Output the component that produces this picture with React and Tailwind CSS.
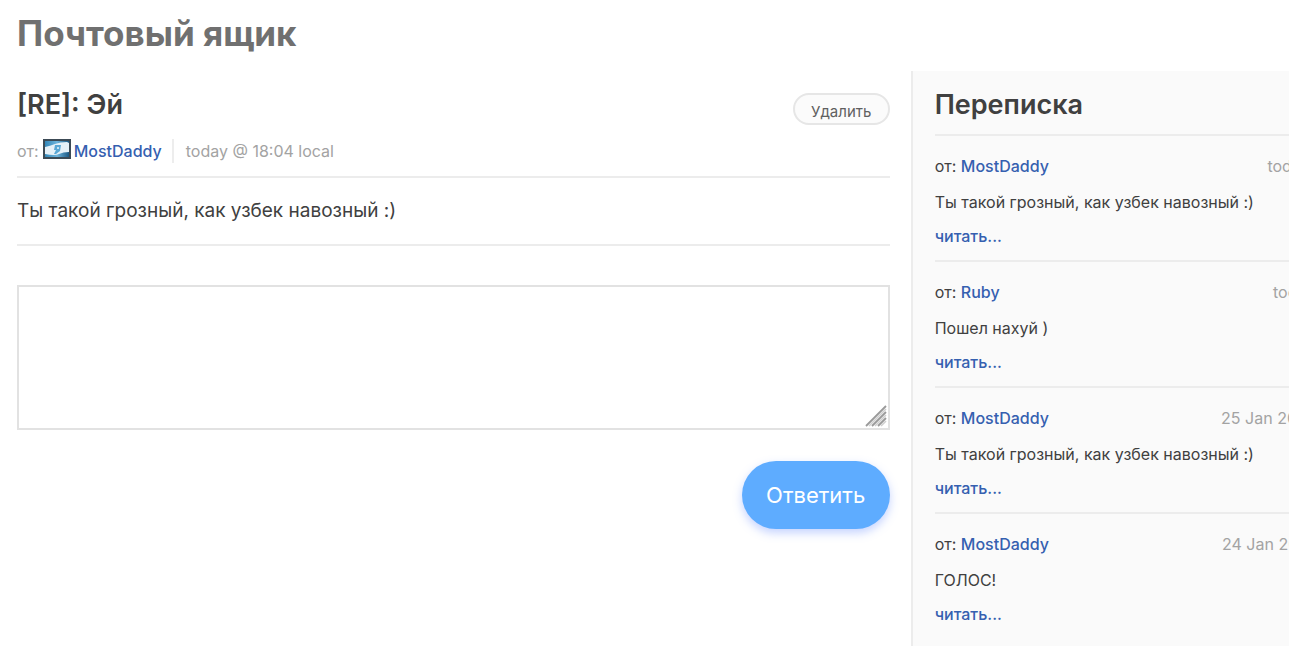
const messages = [
  { id: 1, from: "MostDaddy", date: "today @ 18:04 local", text: "Ты такой грозный, как узбек навозный :)" },
  { id: 2, from: "Ruby", date: "today @ 17:51 local", text: "Пошел нахуй )" },
  { id: 3, from: "MostDaddy", date: "25 Jan 2023 @ 11:14 local", text: "Ты такой грозный, как узбек навозный :)" },
  { id: 4, from: "MostDaddy", date: "24 Jan 2023 @ 11:17 local", text: "ГОЛОС!" },
];

function FlagIcon() {
  return (
    <svg viewBox="0 0 28 20" className="mb-1 ml-1 h-5 w-7 shrink-0" aria-hidden="true">
      <defs>
        <linearGradient id="flag" x1="0" x2="1">
          <stop offset="0" stopColor="#2f83b5" />
          <stop offset="0.5" stopColor="#6db4dc" />
          <stop offset="1" stopColor="#15527d" />
        </linearGradient>
      </defs>
      <rect x="1" y="1" width="26" height="18" fill="url(#flag)" stroke="#3c4a55" strokeWidth="2" />
      <path d="M2 8 Q7 7 12 5 T24 3 L26 4 V13 Q20 13 16 15 T2 15Z" fill="#e6f1f8" />
      <path d="M12 6 H18 L17 12 L13 15 H11 L13 11 H11Z" fill="#5aa8d6" />
      <path d="M14 8 H16 V10 H14Z" fill="#c5e2f2" />
    </svg>
  );
}

function ResizeGrip() {
  return (
    <svg viewBox="0 0 22 22" className="pointer-events-none absolute right-[3px] bottom-[3px] size-[22px]" aria-hidden="true">
      <path d="M1 21 L21 1 M7 21 L21 7 M13 21 L21 13" stroke="#9a9a9a" strokeWidth="1.8" fill="none" />
      <path d="M4 21 L21 4 M10 21 L21 10 M16 21 L21 16" stroke="#cfcfcf" strokeWidth="1.6" fill="none" />
    </svg>
  );
}

function Message({ message }) {
  return (
    <li className="border-t-2 border-[#ececec] pt-[18px] pb-3 text-[16px] leading-6">
      <div className="flex justify-between whitespace-nowrap">
        <span>
          от: <a href="#profile" className="font-medium text-[#3560b0]">{message.from}</a>
        </span>
        <time className="text-[#a3a3a3]">{message.date}</time>
      </div>
      <p className="mt-3">{message.text}</p>
      <a href="#read" className="mt-[10px] block w-fit font-medium text-[#3560b0]">читать...</a>
    </li>
  );
}

function App() {
  return (
    <div className="overflow-x-hidden bg-white pt-3 pb-3 font-['Inter','Liberation_Sans',sans-serif] text-[#404040]">
      <h1 className="px-[17px] text-[35px] leading-[43px] font-bold text-[#707070]">Почтовый ящик</h1>
      <div className="mt-4 flex w-[112%]">
        <main className="min-w-0 flex-1 pr-[21px] pl-[17px]">
          <div className="flex items-start justify-between pt-[18px]">
            <h2 className="text-[27px] leading-8 font-semibold">[RE]: Эй</h2>
            <button className="mt-1 h-8 w-[97px] rounded-full border-2 border-[#e6e6e6] bg-[#fbfbfb] pt-[6px] text-[15px] leading-[22px] text-[#606060]">
              Удалить
            </button>
          </div>
          <div className="flex items-center pt-[14px] pb-[13px] text-[16px] leading-6 text-[#a3a3a3]">
            <span>от:</span>
            <FlagIcon />
            <a href="#profile" className="ml-[3px] font-medium text-[#3560b0]">MostDaddy</a>
            <time className="ml-[10px] border-l-2 border-[#ededed] pl-3">today @ 18:04 local</time>
          </div>
          <p className="border-y-2 border-[#ececec] py-[19px] text-[19px] leading-7">
            Ты такой грозный, как узбек навозный :)
          </p>
          <form className="mt-[39px]">
            <div className="relative">
              <textarea aria-label="Ответ" className="block h-[145px] w-full resize-none border-2 border-[#e2e2e2] p-3 text-[19px] outline-none" />
              <ResizeGrip />
            </div>
            <div className="mt-[31px] flex justify-end">
              <button
                type="button"
                className="h-[68px] w-[148px] rounded-full bg-[#5eacff] text-[22px] text-white shadow-[0_4px_10px_rgba(90,130,255,0.35)]"
              >
                Ответить
              </button>
            </div>
          </form>
        </main>
        <aside className="w-[533px] shrink-0 border-l-2 border-[#ececec] bg-[#fafafa] pt-[18px] pr-7 pb-2 pl-[22px]">
          <h2 className="pb-[13px] text-[27px] leading-8 font-semibold">Переписка</h2>
          <ul>
            {messages.map((message) => (
              <Message key={message.id} message={message} />
            ))}
          </ul>
        </aside>
      </div>
    </div>
  );
}

export default App;
